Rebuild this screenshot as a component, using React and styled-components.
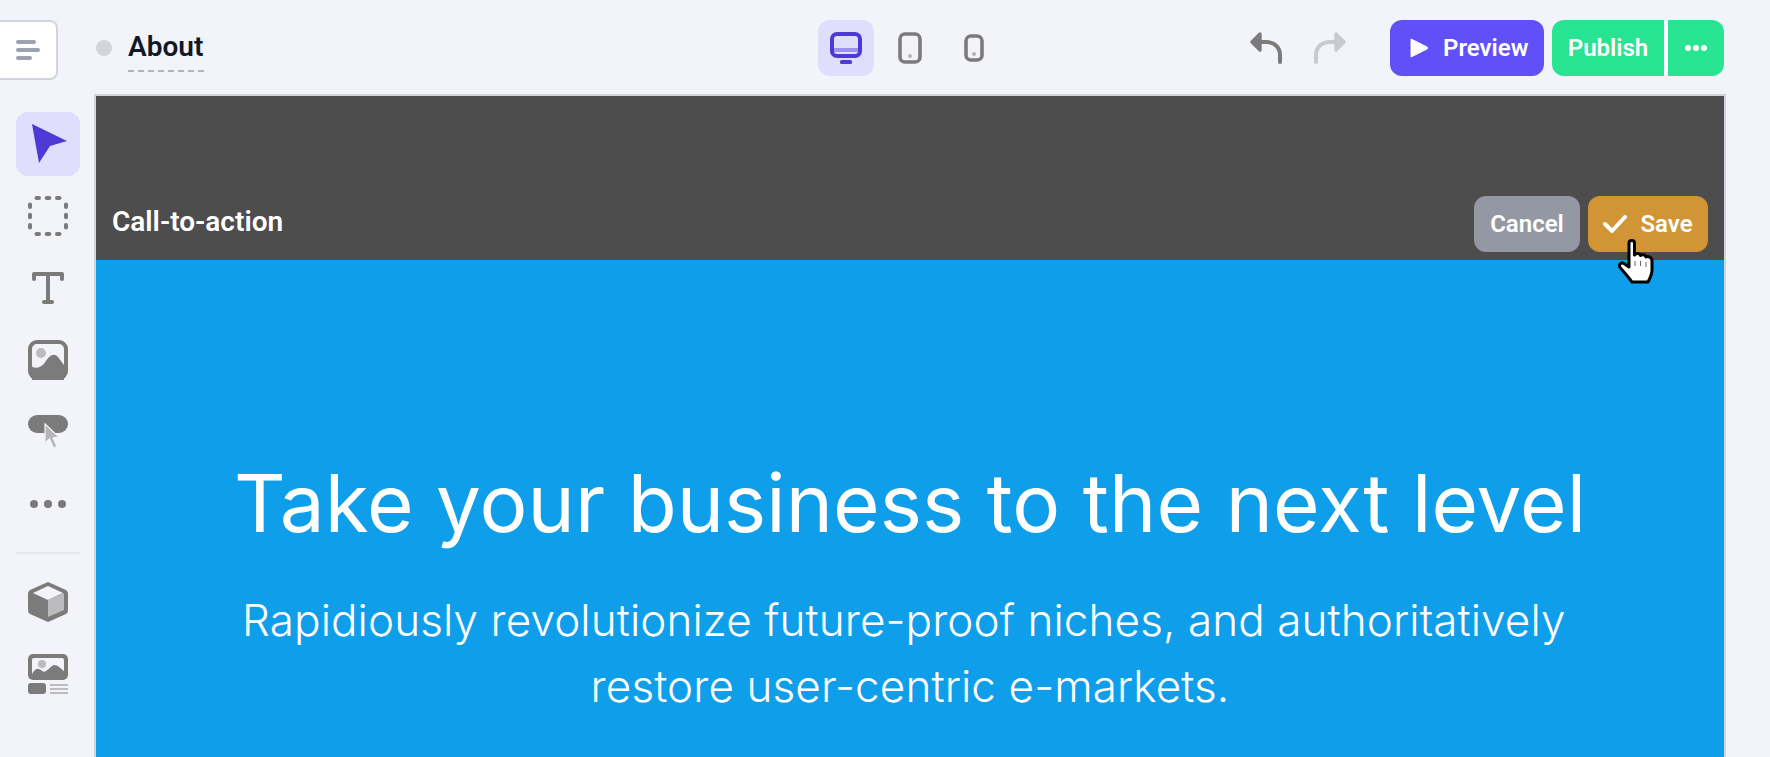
import React from "react";
import styled, { createGlobalStyle } from "styled-components";

const Global = createGlobalStyle`
  html, body { margin: 0; padding: 0; height: 100%; overflow: hidden; background: #f3f4fa; }
  #root { height: 100vh; }
  * { box-sizing: border-box; }
`;

const Page = styled.div`
  width: 1770px;
  height: 757px;
  display: grid;
  grid-template-columns: 94px 1632px 44px;
  grid-template-rows: 94px 1fr;
  background: #f3f4fa;
  font-family: Roboto, "Liberation Sans", sans-serif;
  overflow: hidden;
`;

const MenuCell = styled.div`
  padding-top: 20px;
`;

const MenuButton = styled.button`
  width: 58px;
  height: 60px;
  border: 2px solid #d1d5db;
  border-left: 0;
  border-radius: 0 8px 8px 0;
  background: #fff;
  padding: 0 0 0 16px;
  display: flex;
  align-items: center;
`;

const TopBar = styled.div`
  display: grid;
  grid-template-columns: 1fr auto 1fr;
  align-items: flex-start;
  padding: 20px 2px 0 0;
`;

const TitleGroup = styled.div`
  display: flex;
  align-items: flex-start;
  gap: 16px;
  padding-left: 2px;
`;

const StatusDot = styled.span`
  width: 16px;
  height: 16px;
  margin-top: 20px;
  border-radius: 50%;
  background: #d1d5db;
`;

const PageTitle = styled.div`
  width: 76px;
  height: 52px;
  padding-top: 13px;
  font-size: 28px;
  line-height: 28px;
  font-weight: 600;
  color: #111827;
  white-space: nowrap;
  background: repeating-linear-gradient(90deg, #b3b5bb 0 6px, transparent 6px 10px) bottom / 100% 2px no-repeat;
`;

const Devices = styled.div`
  display: flex;
  gap: 8px;
  margin-left: 2px;
`;

const DeviceButton = styled.div`
  width: 56px;
  height: 56px;
  border-radius: 12px;
  display: flex;
  align-items: center;
  justify-content: center;
  background: ${(p) => (p.$active ? "#e0ddfd" : "transparent")};
`;

const RightGroup = styled.div`
  display: flex;
  justify-content: flex-end;
  align-items: flex-start;
`;

const History = styled.div`
  display: flex;
  gap: 16px;
  margin-right: 36px;
  height: 56px;
  align-items: center;
`;

const HistoryIcon = styled.div`
  width: 48px;
  height: 48px;
  display: flex;
  align-items: center;
  justify-content: center;
`;

const TopButton = styled.div`
  height: 56px;
  display: flex;
  align-items: center;
  color: #fff;
  font-size: 24px;
  font-weight: 600;
`;

const PreviewButton = styled(TopButton)`
  width: 154px;
  padding-left: 20px;
  gap: 15px;
  border-radius: 12px;
  background: #6150f7;
  margin-right: 8px;
`;

const PublishButton = styled(TopButton)`
  width: 112px;
  justify-content: center;
  border-radius: 12px 0 0 12px;
  background: #28e391;
`;

const MoreButton = styled(TopButton)`
  width: 60px;
  justify-content: center;
  border-left: 4px solid #fff;
  border-radius: 0 12px 12px 0;
  background: #28e391;
`;

const Tools = styled.div`
  padding: 18px 0 0 16px;
  display: flex;
  flex-direction: column;
  align-items: flex-start;
`;

const ToolButton = styled.div`
  width: 64px;
  height: 64px;
  margin-bottom: 8px;
  border-radius: 12px;
  display: flex;
  align-items: center;
  justify-content: center;
  background: ${(p) => (p.$active ? "#e0ddfd" : "transparent")};
`;

const ToolDivider = styled.div`
  width: 64px;
  height: 2px;
  background: #e5e7eb;
  margin: 8px 0 16px;
`;

const Canvas = styled.div`
  border: 2px solid #d1d5db;
  border-bottom: 0;
  height: 663px;
  display: flex;
  flex-direction: column;
  overflow: hidden;
`;

const SectionBar = styled.div`
  height: 164px;
  flex: none;
  background: #4d4d4d;
  display: flex;
  align-items: flex-end;
  justify-content: space-between;
  padding: 0 16px 8px 16px;
`;

const SectionName = styled.div`
  color: #fff;
  font-size: 28px;
  line-height: 52px;
  margin-bottom: 4px;
  font-weight: 600;
`;

const BarActions = styled.div`
  position: relative;
  display: flex;
  gap: 8px;
`;

const BarButton = styled.div`
  height: 56px;
  border-radius: 12px;
  display: flex;
  align-items: center;
  justify-content: center;
  color: #fff;
  font-size: 24px;
  font-weight: 600;
`;

const CancelButton = styled(BarButton)`
  width: 106px;
  background: #9498a3;
`;

const SaveButton = styled(BarButton)`
  width: 120px;
  gap: 13px;
  background: #d29535;
`;

const Cursor = styled.div`
  position: absolute;
  right: 54px;
  bottom: -32px;
  width: 36px;
  height: 45px;
`;

const Hero = styled.div`
  flex: 1;
  background: #0f9eea;
  color: #fff;
  font-family: Inter, sans-serif;
  text-align: center;
  padding-top: 199px;
`;

const HeroTitle = styled.h1`
  margin: 0;
  font-size: 80px;
  line-height: 88px;
  font-weight: 400;
  letter-spacing: 0.05px;
`;

const HeroText = styled.p`
  margin: 40px auto 0;
  width: 1400px;
  font-size: 44px;
  line-height: 66px;
  font-weight: 340;
  letter-spacing: 0.1px;
`;

const G = "#7b7b7b";

const Bars = () => (
  <svg width="24" height="20" viewBox="0 0 24 20" fill="#9ca3af">
    <rect x="0" y="0" width="20" height="4" rx="2" />
    <rect x="0" y="8" width="24" height="4" rx="2" />
    <rect x="0" y="16" width="16" height="4" rx="2" />
  </svg>
);

const Arrow = () => (
  <svg width="64" height="64" viewBox="0 0 64 64">
    <path d="M16 12L51 29L34 34L23 51Z" fill="#4f39d4" />
  </svg>
);

const Marquee = () => (
  <svg width="40" height="40" viewBox="0 0 40 40" fill="none" stroke={G} strokeWidth="4" strokeLinecap="round">
    <path d="M8.5 2H11M18.7 2H21.3M29 2H31.5" />
    <path d="M8.5 38H11M18.7 38H21.3M29 38H31.5" />
    <path d="M2 8.5V11M2 18.7V21.3M2 29V31.5" />
    <path d="M38 8.5V11M38 18.7V21.3M38 29V31.5" />
  </svg>
);

const TextIcon = () => (
  <svg width="32" height="32" viewBox="0 0 32 32" fill="none" stroke={G} strokeWidth="4" strokeLinecap="round" strokeLinejoin="round">
    <path d="M2 7V2H30V7" />
    <path d="M16 2V30" />
    <path d="M12 30H20" />
  </svg>
);

const ImageIcon = () => (
  <svg width="40" height="40" viewBox="0 0 40 40">
    <rect width="40" height="40" rx="9" fill={G} />
    <rect x="4" y="4" width="32" height="26" rx="5" fill="#f3f4fa" />
    <circle cx="13" cy="13" r="5" fill="#bcbcbf" />
    <path d="M4 27C10 29 14 27 18 21C21 16 26 12 30 17L36 25V40H4Z" fill={G} />
  </svg>
);

const ButtonIcon = () => (
  <svg width="40" height="34" viewBox="0 0 40 34">
    <rect x="0" y="0" width="40" height="18" rx="9" fill={G} />
    <path d="M17 9L17 28L21.5 24L25.5 33L29 31.5L25 23L31 22Z" fill="#b5b5b9" stroke="#f3f4fa" strokeWidth="1.2" />
  </svg>
);

const DotsIcon = ({ fill = G, r = 4, gap = 14, w = 40, h = 10 }) => (
  <svg width={w} height={h} viewBox={`0 0 ${w} ${h}`} fill={fill}>
    <circle cx={w / 2 - gap} cy={h / 2} r={r} />
    <circle cx={w / 2} cy={h / 2} r={r} />
    <circle cx={w / 2 + gap} cy={h / 2} r={r} />
  </svg>
);

const Cube = () => (
  <svg width="40" height="40" viewBox="0 0 40 40">
    <path d="M20 0L38 8Q40 9 40 12V28Q40 31 38 32L20 40L2 32Q0 31 0 28V12Q0 9 2 8Z" fill={G} />
    <path d="M20 4L35 11L20 18L5 11Z" fill="#f3f4fa" />
    <path d="M20 18L36 11V28L20 35Z" fill="#bcbcbf" />
  </svg>
);

const Template = () => (
  <svg width="40" height="40" viewBox="0 0 40 40">
    <rect width="40" height="26" rx="5" fill={G} />
    <rect x="4" y="4" width="32" height="18" rx="2" fill="#f3f4fa" />
    <circle cx="14" cy="10" r="4" fill="#bcbcbf" />
    <path d="M4 20C8 13 11 14 14 17C18 20 22 12 26 11C30 11 32 14 36 17V24H4Z" fill={G} />
    <rect y="29" width="18" height="11" rx="3" fill={G} />
    <rect x="22" y="30" width="18" height="2" fill="#bcbcbf" />
    <rect x="22" y="34" width="18" height="2" fill="#bcbcbf" />
    <rect x="22" y="38" width="18" height="2" fill="#bcbcbf" />
  </svg>
);

const Desktop = () => (
  <svg width="32" height="32" viewBox="0 0 32 32" fill="none">
    <rect x="2" y="2" width="28" height="22" rx="5" stroke="#4f39d4" strokeWidth="4" />
    <rect x="4" y="16" width="24" height="4" fill="#9d91eb" />
    <rect x="10" y="28" width="12" height="4" rx="1.5" fill="#4f39d4" />
  </svg>
);

const Tablet = () => (
  <svg width="24" height="32" viewBox="0 0 24 32" fill="none">
    <rect x="2" y="2" width="20" height="28" rx="5" stroke={G} strokeWidth="3.6" />
    <circle cx="12" cy="24" r="2" fill="#b5b5b9" />
  </svg>
);

const Phone = () => (
  <svg width="20" height="28" viewBox="0 0 20 28" fill="none">
    <rect x="2" y="2" width="16" height="24" rx="5" stroke={G} strokeWidth="3.6" />
    <circle cx="10" cy="20" r="2" fill="#b5b5b9" />
  </svg>
);

const Undo = ({ color, flip }) => (
  <svg width="32" height="32" viewBox="0 0 32 32" style={flip ? { transform: "scaleX(-1)" } : undefined}>
    <path d="M10 2L2 10L10 18Z" fill={color} stroke={color} strokeWidth="3.4" strokeLinejoin="round" />
    <path d="M10 10H16C24 10 30 15 30 23V30" fill="none" stroke={color} strokeWidth="4" strokeLinecap="round" />
  </svg>
);

const Play = () => (
  <svg width="18" height="20" viewBox="0 0 18 20">
    <path d="M1 1L17 9Q18 10 17 11L1 19Z" fill="#fff" stroke="#fff" strokeLinejoin="round" />
  </svg>
);

const Check = () => (
  <svg width="24" height="18" viewBox="0 0 24 18" fill="none">
    <path d="M2 9L9 16L22 2" stroke="#fff" strokeWidth="4" strokeLinecap="round" strokeLinejoin="round" />
  </svg>
);

const Hand = () => (
  <svg width="36" height="45" viewBox="0 0 36 45">
    <path
      d="M11 4C11 0.8 16.5 0.8 16.5 4V16C18 14 21.5 14 22.5 16.5C24 15 27.5 15.5 28 18C30 17 34 18 34 22V31C34 36 32 39 30 43H14C11 39 7 34 2.5 29C0 26 3 22.5 6 24.5L11 28Z"
      fill="#fff"
      stroke="#000"
      strokeWidth="3"
      strokeLinejoin="round"
    />
    <path d="M17 22V27M22.5 22V27M28 23V28" stroke="#666" strokeWidth="1" />
  </svg>
);

export default function App() {
  return (
    <Page>
      <Global />
      <MenuCell>
        <MenuButton aria-label="Menu">
          <Bars />
        </MenuButton>
      </MenuCell>
      <TopBar>
        <TitleGroup>
          <StatusDot />
          <PageTitle>About</PageTitle>
        </TitleGroup>
        <Devices>
          <DeviceButton $active><Desktop /></DeviceButton>
          <DeviceButton><Tablet /></DeviceButton>
          <DeviceButton><Phone /></DeviceButton>
        </Devices>
        <RightGroup>
          <History>
            <HistoryIcon><Undo color={G} /></HistoryIcon>
            <HistoryIcon><Undo color="#c9cacf" flip /></HistoryIcon>
          </History>
          <PreviewButton><Play />Preview</PreviewButton>
          <PublishButton>Publish</PublishButton>
          <MoreButton><DotsIcon fill="#fff" r={3} gap={8} w={24} h={8} /></MoreButton>
        </RightGroup>
      </TopBar>
      <div />
      <Tools>
        <ToolButton $active><Arrow /></ToolButton>
        <ToolButton><Marquee /></ToolButton>
        <ToolButton><TextIcon /></ToolButton>
        <ToolButton><ImageIcon /></ToolButton>
        <ToolButton><ButtonIcon /></ToolButton>
        <ToolButton><DotsIcon /></ToolButton>
        <ToolDivider />
        <ToolButton><Cube /></ToolButton>
        <ToolButton><Template /></ToolButton>
      </Tools>
      <Canvas>
        <SectionBar>
          <SectionName>Call-to-action</SectionName>
          <BarActions>
            <CancelButton>Cancel</CancelButton>
            <SaveButton><Check />Save</SaveButton>
            <Cursor><Hand /></Cursor>
          </BarActions>
        </SectionBar>
        <Hero>
          <HeroTitle>Take your business to the next level</HeroTitle>
          <HeroText>
            Rapidiously revolutionize future-proof niches, and authoritatively{"\u00a0"}
            <br />
            restore user-centric e-markets.
          </HeroText>
        </Hero>
      </Canvas>
    </Page>
  );
}
